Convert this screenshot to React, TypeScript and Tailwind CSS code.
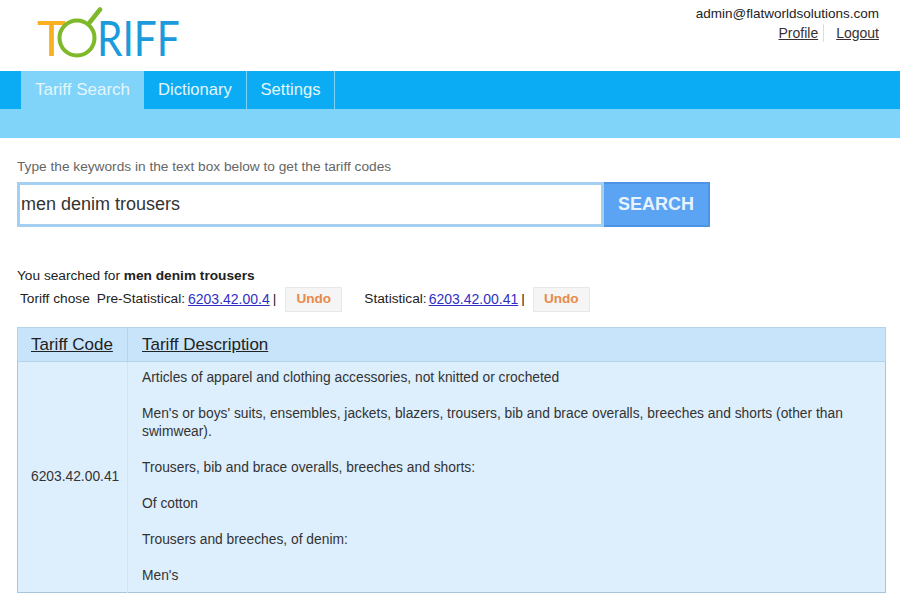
const font = "font-['Liberation_Sans',Arial,sans-serif]";

function Logo() {
  return (
    <div className="flex items-start h-[71px] pl-[37px] pt-[11px] font-['Lato',sans-serif] font-normal text-[49px] leading-[52px]">
      <span className="text-[#f9b122]">T</span>
      <svg width="52" height="52" viewBox="0 0 52 52" className="ml-[-13px] mt-[-4px] shrink-0">
        <circle cx="24" cy="31" r="17.5" fill="none" stroke="#7db928" strokeWidth="4" />
        <path d="M37 15 L47 2.5" stroke="#7db928" strokeWidth="4.5" strokeLinecap="round" fill="none" />
      </svg>
      <span className="text-[#1b9bdc] ml-[-8px] origin-left scale-x-[0.83]">RIFF</span>
    </div>
  );
}

function UndoButton() {
  return (
    <button className="w-[57px] h-[25px] bg-[#f5f5f5] border border-[#e8e8e8] text-[#e98a4a] font-bold text-[13.6px]">
      Undo
    </button>
  );
}

export default function App() {
  return (
    <div className={`${font} w-[900px] h-[601px] overflow-hidden bg-white text-[#333] relative`}>
      <header className="h-[71px] relative">
        <Logo />
        <div className="absolute right-[21px] top-[5px] text-right text-[13.5px] leading-[18px] text-[#222]">
          <div>admin@flatworldsolutions.com</div>
          <div className="mt-[1px] flex justify-end text-[14px] text-[#3a2f33]">
            <a className="underline pr-[5px] border-r border-[#ddd]">Profile</a>
            <a className="underline pl-[12px]">Logout</a>
          </div>
        </div>
      </header>

      <nav className="h-[38px] bg-[#0bacf3] pl-[21px] flex text-[16.6px] text-[#e4f6fd]">
        <a className="w-[123px] flex items-center justify-center bg-[#80d3f9] text-[17px]">Tariff Search</a>
        <a className="w-[103px] flex items-center justify-center border-r border-[#7fd2f8]">Dictionary</a>
        <a className="w-[88px] flex items-center justify-center border-r border-[#7fd2f8]">Settings</a>
      </nav>
      <div className="h-[29px] bg-[#80d3f9]" />

      <main className="px-[17px]">
        <p className="mt-[21px] text-[13.7px] leading-[16px] text-[#666]">
          Type the keywords in the text box below to get the tariff codes
        </p>
        <div className="mt-[7px] flex h-[45px] w-[693px]">
          <div className="w-[587px] border-[3px] border-[#a3cff3] pl-[1px] flex items-center text-[18px] text-[#333]">
            men denim trousers
          </div>
          <button className="w-[106px] bg-[#5ba4f4] border-[2px] border-[#4f94e4] border-l-0 text-[#e9f2fd] font-bold text-[18px]">
            SEARCH
          </button>
        </div>

        <p className="mt-[41px] text-[13.7px] leading-[16px] text-[#222]">
          You searched for <b>men denim trousers</b>
        </p>
        <div className="mt-[3px] pl-[3px] flex items-center text-[13.7px] text-[#222] h-[25px]">
          <span>Toriff chose</span>
          <span className="ml-[7px]">Pre-Statistical:</span>
          <a className="ml-[3px] underline text-[14px] text-[#2f2fc4]">6203.42.00.4</a>
          <span className="ml-[3px]">|</span>
          <span className="ml-[9px]"><UndoButton /></span>
          <span className="ml-[22px]">Statistical:</span>
          <a className="ml-[2px] underline text-[14px] text-[#2f2fc4]">6203.42.00.41</a>
          <span className="ml-[3px]">|</span>
          <span className="ml-[8px]"><UndoButton /></span>
        </div>

        <table className="mt-[15px] w-[869px] border-collapse table-fixed border border-[#a3c6dd] text-[13.8px]">
          <colgroup>
            <col className="w-[110px]" />
            <col />
          </colgroup>
          <thead>
            <tr className="h-[34px] bg-[#c8e4fb] text-[17px] text-[#222]">
              <th className="font-normal text-left pl-[13px] border border-[#b4d4e8]"><span className="underline">Tariff Code</span></th>
              <th className="font-normal text-left pl-[14px] border border-[#b4d4e8]"><span className="underline">Tariff Description</span></th>
            </tr>
          </thead>
          <tbody className="bg-[#ddeefd] text-[#333]">
            <tr>
              <td className="pl-[13px] border-r border-[#cfe3f4]">6203.42.00.41</td>
              <td className="pl-[14px] pr-[30px] pt-[7px] pb-[7px] leading-[18px]">
                <p>Articles of apparel and clothing accessories, not knitted or crocheted</p>
                <p className="mt-[18px]">Men's or boys' suits, ensembles, jackets, blazers, trousers, bib and brace overalls, breeches and shorts (other than swimwear).</p>
                <p className="mt-[18px]">Trousers, bib and brace overalls, breeches and shorts:</p>
                <p className="mt-[18px]">Of cotton</p>
                <p className="mt-[18px]">Trousers and breeches, of denim:</p>
                <p className="mt-[18px]">Men's</p>
              </td>
            </tr>
          </tbody>
        </table>
      </main>
    </div>
  );
}
